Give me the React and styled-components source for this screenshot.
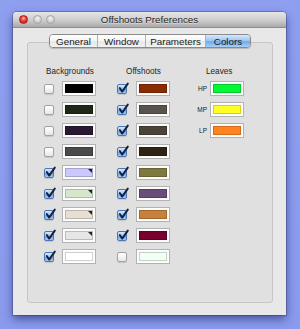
import React from "react";
import styled, { createGlobalStyle } from "styled-components";

const Global = createGlobalStyle`
  html, body { margin: 0; padding: 0; }
  body {
    width: 300px; height: 329px; overflow: hidden;
    background: linear-gradient(180deg, #8f9ff0 0%, #8a9aec 100%);
    font-family: "Liberation Sans", Arial, sans-serif;
  }
`;

const Window = styled.div`
  margin: 12px 0 0 13px;
  width: 273px;
  height: 303px;
  display: flex;
  flex-direction: column;
  background: #e8e8e8;
  border-radius: 4px 4px 0 0;
  box-shadow: 0 4px 10px rgba(20, 30, 100, 0.6), 0 0 0 1px rgba(60, 60, 90, 0.35);
`;

const TitleBar = styled.div`
  height: 15px;
  flex: none;
  position: relative;
  display: flex;
  align-items: center;
  justify-content: center;
  border-radius: 4px 4px 0 0;
  background: linear-gradient(180deg, #e6e6e6 0%, #cdcdcd 55%, #a9a9a9 100%);
  border-bottom: 1px solid #8c8c8c;
`;

const Lights = styled.div`
  position: absolute;
  left: 6px;
  top: 3px;
  display: flex;
  gap: 4.5px;
`;

const Light = styled.div`
  width: 9px;
  height: 9px;
  border-radius: 50%;
  box-sizing: border-box;
  border: 1px solid ${(p) => (p.$red ? "#9a2020" : "#a6a6a6")};
  background: ${(p) =>
    p.$red
      ? "radial-gradient(circle at 50% 35%, #ffb0a8 0%, #f23a2e 45%, #b81810 100%)"
      : "radial-gradient(circle at 50% 35%, #f4f4f4 0%, #d4d4d4 50%, #b4b4b4 100%)"};
`;

const Title = styled.div`
  font-size: 9.8px;
  color: #262626;
  text-shadow: 0 1px 0 rgba(255, 255, 255, 0.5);
`;

const Body = styled.div`
  flex: 1;
  display: flex;
  flex-direction: column;
  padding: 6px 13px 12px 14px;
`;

const TabBar = styled.div`
  display: flex;
  justify-content: center;
  position: relative;
  z-index: 1;
`;

const Tabs = styled.div`
  display: flex;
  height: 14px;
  border: 1px solid #8a8a8a;
  border-radius: 4px;
  box-sizing: border-box;
  overflow: hidden;
  box-shadow: 0 1px 1px rgba(0, 0, 0, 0.18);
`;

const Tab = styled.div`
  width: ${(p) => p.$w}px;
  box-sizing: border-box;
  display: flex;
  align-items: center;
  justify-content: center;
  font-size: 9.8px;
  color: #1a1a1a;
  border-left: ${(p) => (p.$first ? "none" : "1px solid #b0b0b0")};
  background: ${(p) =>
    p.$active
      ? "linear-gradient(180deg, #d6e8fc 0%, #98c4f4 50%, #6fa9ee 55%, #a8d0fa 100%)"
      : "linear-gradient(180deg, #ffffff 0%, #f4f4f4 50%, #e8e8e8 55%, #f2f2f2 100%)"};
`;

const Group = styled.div`
  flex: 1;
  margin-top: -6px;
  background: #e0e0e0;
  border: 1px solid #c6c6c6;
  border-radius: 3px;
  padding: 22px 0 0 16px;
  display: flex;
  align-items: flex-start;
`;

const Column = styled.div`
  display: flex;
  flex-direction: column;
  width: ${(p) => p.$w}px;
  margin-left: ${(p) => p.$ml || 0}px;
`;

const Header = styled.div`
  height: 13px;
  line-height: 13px;
  font-size: 8.2px;
  color: #1e1e1e;
  padding-left: ${(p) => p.$pl || 0}px;
  text-align: ${(p) => (p.$pl ? "left" : "center")};
`;

const Row = styled.div`
  height: 21px;
  display: flex;
  align-items: center;
  justify-content: space-between;
`;

const LabelRow = styled.div`
  height: 21px;
  display: flex;
  align-items: center;
  gap: 3px;
`;

const Label = styled.div`
  width: 12px;
  text-align: right;
  font-size: 6.5px;
  color: #222;
`;

const Check = styled.div`
  width: 10px;
  height: 10px;
  box-sizing: border-box;
  border-radius: 2px;
  position: relative;
  border: 1px solid ${(p) => (p.$on ? "#4c77b4" : "#a2a2a2")};
  background: ${(p) =>
    p.$on
      ? "linear-gradient(180deg, #d8e8fb 0%, #9cc2f0 50%, #6c9fe2 55%, #a6cdf6 100%)"
      : "linear-gradient(180deg, #ffffff 0%, #f2f2f2 60%, #e6e6e6 100%)"};
  box-shadow: 0 1px 1px rgba(0, 0, 0, 0.12);
`;

const Tick = styled.svg`
  position: absolute;
  left: 0px;
  top: -2px;
  width: 10px;
  height: 10px;
  overflow: visible;
`;

const Well = styled.div`
  width: 34px;
  height: 15px;
  box-sizing: border-box;
  border: 1px solid #b2b2b2;
  background: #fafafa;
  padding: 1px 2px 2px 1px;
  box-shadow: inset 0 0 0 1px #ffffff;
  display: flex;
`;

const Color = styled.div`
  flex: 1;
  margin: 1px 0 0 1px;
  position: relative;
  background: ${(p) => p.$c};
  border: 1px solid rgba(0, 0, 0, 0.18);
  &::after {
    content: "";
    display: ${(p) => (p.$corner ? "block" : "none")};
    position: absolute;
    right: 0;
    top: 0;
    border-top: 4px solid #222;
    border-left: 4px solid transparent;
  }
`;

const CheckBox = ({ on }) => (
  <Check $on={on}>
    {on && (
      <Tick viewBox="0 0 10 10">
        <path d="M1.8 5 L4.2 8.6 L9.8 0.6" fill="none" stroke="#13213f" strokeWidth="1.9" strokeLinecap="round" strokeLinejoin="round" />
      </Tick>
    )}
  </Check>
);

const Swatch = ({ c, corner }) => (
  <Well>
    <Color $c={c} $corner={corner} />
  </Well>
);

const backgrounds = [
  { on: false, c: "#000000" },
  { on: false, c: "#1e2817" },
  { on: false, c: "#2b1832" },
  { on: false, c: "#4a4a4c" },
  { on: true, c: "#c9c9fd", corner: true },
  { on: true, c: "#d6e6cb", corner: true },
  { on: true, c: "#e8dfd4", corner: true },
  { on: true, c: "#e6e6e6", corner: true },
  { on: true, c: "#ffffff" },
];

const offshoots = [
  { on: true, c: "#8a2b02" },
  { on: true, c: "#59534e" },
  { on: true, c: "#494437" },
  { on: true, c: "#2d2416" },
  { on: true, c: "#7f793f" },
  { on: true, c: "#694e79" },
  { on: true, c: "#c6813a" },
  { on: true, c: "#77002e" },
  { on: false, c: "#f2fff3" },
];

const leaves = [
  { l: "HP", c: "#00f835" },
  { l: "MP", c: "#ffff26" },
  { l: "LP", c: "#ff8420" },
];

export default function App() {
  return (
    <>
      <Global />
      <Window>
        <TitleBar>
          <Lights>
            <Light $red />
            <Light />
            <Light />
          </Lights>
          <Title>Offshoots Preferences</Title>
        </TitleBar>
        <Body>
          <TabBar>
            <Tabs>
              <Tab $w={47} $first>General</Tab>
              <Tab $w={48}>Window</Tab>
              <Tab $w={60}>Parameters</Tab>
              <Tab $w={45} $active>Colors</Tab>
            </Tabs>
          </TabBar>
          <Group>
            <Column $w={52}>
              <Header>Backgrounds</Header>
              {backgrounds.map((r, i) => (
                <Row key={i}>
                  <CheckBox on={r.on} />
                  <Swatch c={r.c} corner={r.corner} />
                </Row>
              ))}
            </Column>
            <Column $w={53} $ml={21}>
              <Header>Offshoots</Header>
              {offshoots.map((r, i) => (
                <Row key={i}>
                  <CheckBox on={r.on} />
                  <Swatch c={r.c} />
                </Row>
              ))}
            </Column>
            <Column $w={49} $ml={25}>
              <Header $pl={11}>Leaves</Header>
              {leaves.map((r, i) => (
                <LabelRow key={i}>
                  <Label>{r.l}</Label>
                  <Swatch c={r.c} />
                </LabelRow>
              ))}
            </Column>
          </Group>
        </Body>
      </Window>
    </>
  );
}
